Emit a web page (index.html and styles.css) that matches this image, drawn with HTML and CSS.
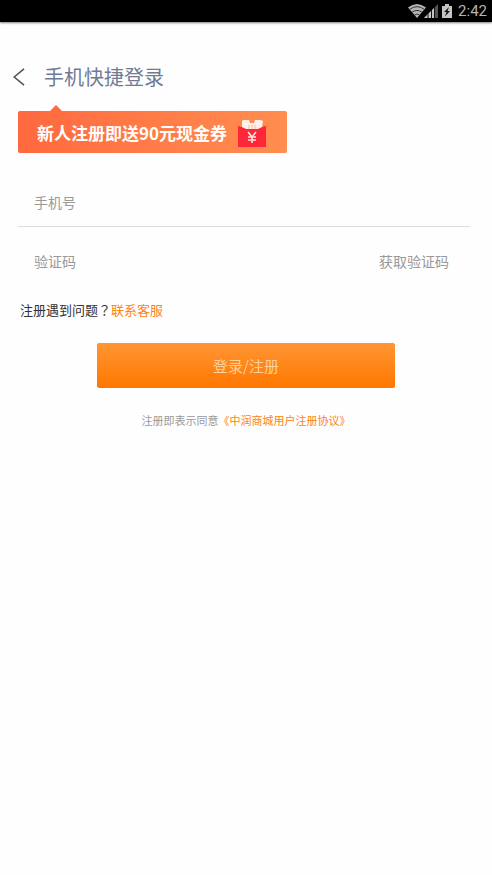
FILE: index.html
```html
<!DOCTYPE html>
<html lang="zh-CN">
<head>
<meta charset="utf-8">
<meta name="viewport" content="width=device-width, initial-scale=1">
<title>手机快捷登录</title>
<link rel="stylesheet" href="styles.css">
</head>
<body>
<div class="status-bar">
  <svg class="status-icons" width="46" height="16" viewBox="0 0 46 16" aria-hidden="true">
    <path d="M0 4.500Q9 -2.500 18 4.500L9 15Z" fill="#b4b4b4"/>
    <path d="M1.500 6.500Q9 .8 16.500 6.500M4 9.300Q9 5.500 14 9.300M6.500 12Q9 10 11.500 12" fill="none" stroke="#333" stroke-width="1"/>
    <path d="M16 15L30 1V15Z" fill="#555"/>
    <path d="M16 15L26 5V15Z" fill="#c4c4c4"/>
    <path d="M20 10V15M23.500 7V15M26.500 4V15" stroke="#111" stroke-width="1"/>
    <path d="M34 3H37V1H41V3H44V15H34Z" fill="#c4c4c4"/>
    <path d="M41 4L36 9H38.500L37 13.500L42 8H39.500Z" fill="#111"/>
  </svg>
  <span class="clock">2:42</span>
</div>
<main class="page">
  <header class="header">
    <button class="back" type="button" aria-label="返回">
      <svg width="12" height="18" viewBox="0 0 12 18" aria-hidden="true"><path d="M11 .8L1.200 9L11 17.200" fill="none" stroke="#555" stroke-width="1.600"/></svg>
    </button>
    <h1 class="title">手机快捷登录</h1>
  </header>
  <div class="banner">
    <span>新人注册即送90元现金券</span>
    <svg class="envelope" width="30" height="28" viewBox="0 0 30 28" aria-hidden="true">
      <path d="M1 6H29V27H1Z" fill="#ff2638"/>
      <path d="M1 6L6 8H24L29 6V5H1Z" fill="#ff8b4f"/>
      <path d="M1 6L8 8H22L29 6V10H1Z" fill="#ff2638"/>
      <path d="M5 1L6 0H12L13 3H17L18 0H24L26 1L25 7L21 9H9L5 7Z" fill="#fff1e9"/>
      <path d="M12 5V9M15 5V9M18 5V9" stroke="#ffb79d" stroke-width="1"/>
      <path d="M11 12L15 17L19 12M15 17V23M11 17H19M11 20H19" fill="none" stroke="#ffe7df" stroke-width="1.600"/>
    </svg>
  </div>
  <form class="form">
    <div class="field field-phone">
      <input class="input" type="tel" placeholder="手机号" aria-label="手机号">
    </div>
    <div class="field">
      <input class="input" type="text" placeholder="验证码" aria-label="验证码">
      <button class="get-code" type="button">获取验证码</button>
    </div>
    <p class="help">注册遇到问题<span class="mark" lang="zh-TW">？</span><a href="#service">联系客服</a></p>
    <button class="submit" type="submit">登录/注册</button>
    <p class="terms">注册即表示同意<a href="#terms">《中润商城用户注册协议》</a></p>
  </form>
</main>
</body>
</html>
```
FILE: styles.css
```css
* {
  box-sizing: border-box;
}

body {
  margin: 0;
  background: #fefefe;
  color: #333;
  font-family: "Noto Sans CJK SC", "Noto Sans", sans-serif;
}

button,
input {
  border: 0;
  padding: 0;
  background: none;
  font-family: inherit;
}

a {
  color: #ff8316;
  text-decoration: none;
}

.status-bar {
  display: flex;
  align-items: center;
  justify-content: flex-end;
  gap: 4px;
  height: 22px;
  padding-right: 5px;
  background: #000;
  box-shadow: 0 1px 2px rgba(0, 0, 0, 0.5);
}

.clock {
  color: #b4b4b4;
  font: 15px/22px Roboto, sans-serif;
}

.page {
  padding: 40px 18px 0;
}

.header {
  display: flex;
  align-items: center;
  gap: 19px;
  height: 30px;
  margin-left: -5px;
}

.back {
  display: flex;
}

.title {
  margin: 0;
  color: #6f7b94;
  font-size: 20px;
  font-weight: 400;
  line-height: 30px;
}

.banner {
  position: relative;
  display: flex;
  align-items: center;
  gap: 10px;
  width: fit-content;
  height: 42px;
  margin-top: 19px;
  padding: 0 20px 0 19px;
  border-radius: 2px;
  background: linear-gradient(90deg, #ff693f, #ff8e50);
  color: #fff;
  font-size: 17px;
  font-weight: 700;
}

.envelope {
  margin-top: 4px;
}

.banner::before {
  content: "";
  position: absolute;
  top: -6px;
  left: 31px;
  border: 7px solid transparent;
  border-top: 0;
  border-bottom-color: #ff6c41;
}

.form {
  display: flex;
  flex-direction: column;
  margin-top: 25px;
}

.field {
  display: flex;
  align-items: center;
  height: 68px;
  margin-right: 4px;
  padding: 0 21px 0 16px;
}

.field-phone {
  height: 49px;
  border-bottom: 1px solid #ddd;
}

.input {
  flex: 1;
  min-width: 0;
  height: 40px;
  color: #333;
  font-size: 14px;
  outline: 0;
}

.input::placeholder {
  color: #999;
  opacity: 1;
}

.get-code {
  color: #999;
  font-size: 14px;
}

.help {
  margin: 5px 2px 0;
  font-size: 13px;
  line-height: 20px;
}

.mark {
  font-family: "Noto Sans CJK TC", sans-serif;
}

.submit {
  width: 298px;
  max-width: 100%;
  height: 45px;
  margin: 23px auto 0;
  border-radius: 2px;
  background: linear-gradient(#ff9634, #ff7700);
  color: #ffd09b;
  font-size: 15px;
}

.terms {
  margin: 23px 0 0;
  color: #999;
  font-size: 11px;
  line-height: 18px;
  text-align: center;
}
```
